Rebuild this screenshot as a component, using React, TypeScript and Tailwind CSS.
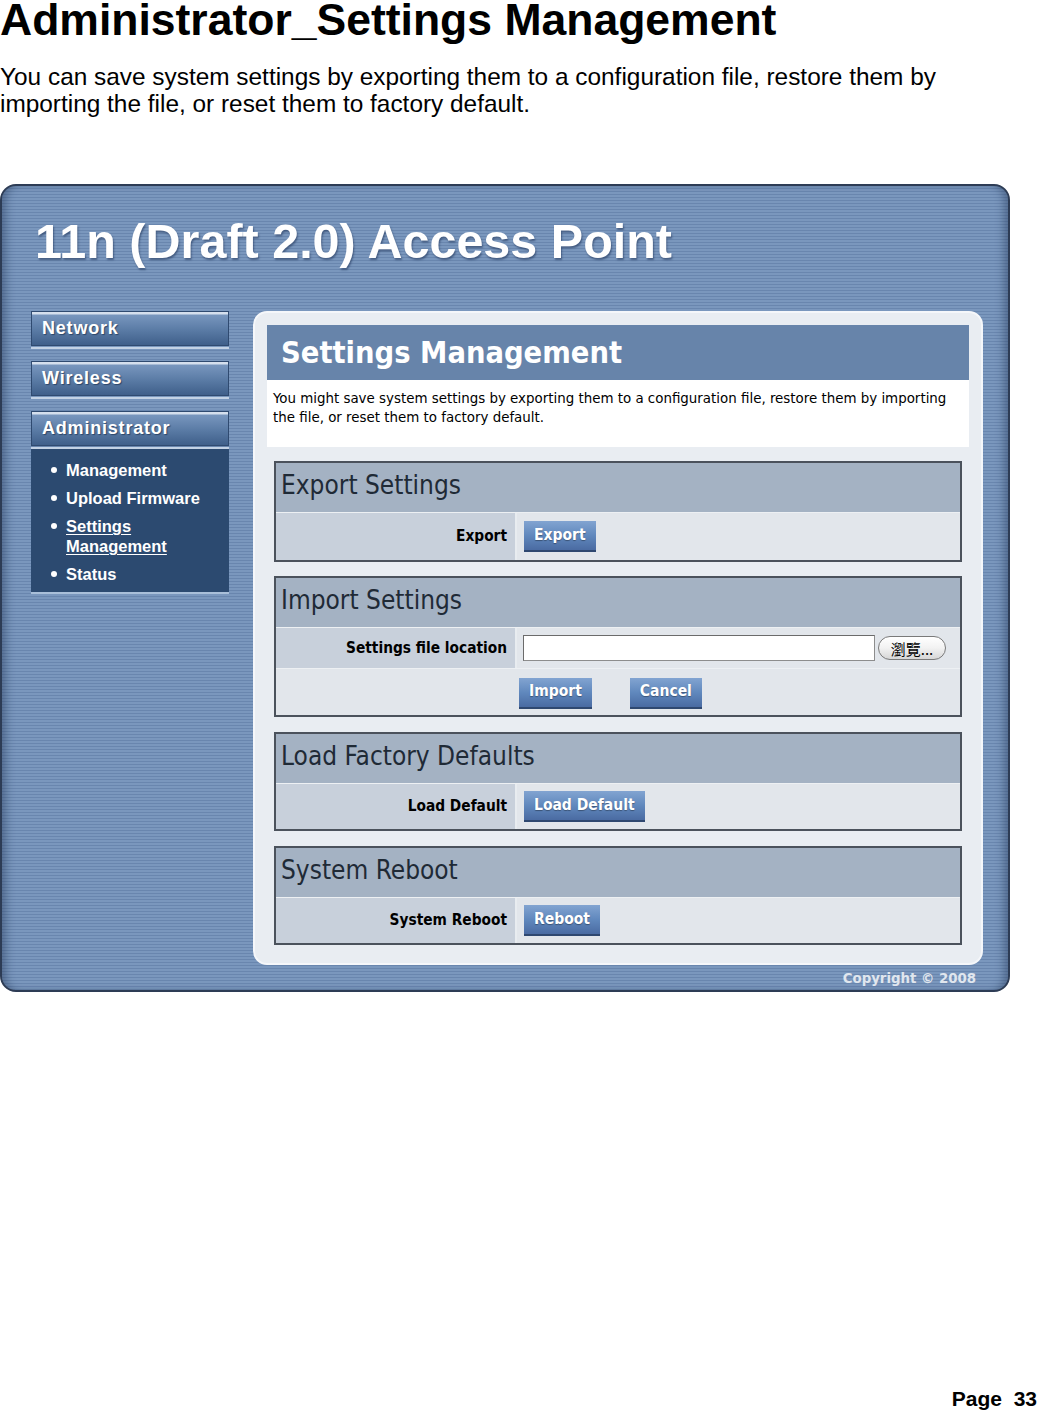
import React from "react";

const arial = "font-['Liberation_Sans',Arial,sans-serif]";
const tahoma = "font-['DejaVu_Sans_Condensed','DejaVu_Sans',sans-serif]";

function NavButton({ label }: { label: string }) {
  return (
    <div className="flex flex-col">
      <div
        className={`h-[35px] border border-[#2f4a70] bg-[linear-gradient(180deg,#d5dfed_0px,#d5dfed_2px,#7896be_3px,#5a7ba5_55%,#3f5f8a_100%)] flex items-center pl-[10px] text-white font-bold text-[18px] tracking-[0.8px] ${arial} [text-shadow:1px_1px_1px_rgba(20,40,70,0.6)]`}
      >
        {label}
      </div>
      <div className="h-[2px] mt-[1px] bg-[#c3d2e5]" />
    </div>
  );
}

function BlueButton({ children }: { children: React.ReactNode }) {
  return (
    <button
      className={`h-[31px] px-[10px] text-white font-bold text-[15.5px] ${tahoma} bg-[linear-gradient(180deg,#82a4d1_0%,#6088bd_50%,#4a6ba2_100%)] border-b-2 border-[#2f4870] [text-shadow:0_1px_1px_rgba(0,0,0,0.35)]`}
    >
      {children}
    </button>
  );
}

function Box({ title, children, className = "" }: { title: string; children: React.ReactNode; className?: string }) {
  return (
    <div className={`border-2 border-[#4b525c] flex flex-col ${className}`}>
      <div className={`h-[49px] bg-[#a4b2c3] pl-[5px] pt-[7px] text-[26px] leading-[30px] text-[#1f2a36] ${tahoma}`}>
        {title}
      </div>
      {children}
    </div>
  );
}

function Row({ label, height, children }: { label: string; height: string; children: React.ReactNode }) {
  return (
    <div className={`flex ${height} border-t border-[#edf0f3]`}>
      <div
        className={`w-[241px] bg-[#c8d0db] border-r-2 border-[#e8ecf0] flex items-center justify-end pr-[8px] font-bold text-[15.3px] text-black ${tahoma}`}
      >
        {label}
      </div>
      <div className="flex-1 bg-[#e2e6eb] flex items-center pl-[7px]">{children}</div>
    </div>
  );
}

export default function App() {
  return (
    <div className={`w-[1037px] h-[1411px] bg-white flex flex-col ${arial} text-black`}>
      <h1 className="text-[44.5px] leading-[40px] font-bold whitespace-nowrap">Administrator_Settings Management</h1>
      <p className="mt-[23px] text-[24.4px] leading-[27px] w-[1000px]">
        You can save system settings by exporting them to a configuration file, restore them by importing the file, or
        reset them to factory default.
      </p>

      <div className="mt-[67px] w-[1010px] h-[808px] border-2 border-[#2d3c55] rounded-[16px] overflow-hidden flex flex-col bg-[repeating-linear-gradient(180deg,#7a97bd_0px,#7a97bd_2px,#6986ae_2px,#6986ae_3px)] shadow-[inset_8px_0_8px_-4px_rgba(30,50,85,0.45),inset_-8px_0_8px_-4px_rgba(30,50,85,0.45)]">
        <div
          className={`pl-[33px] pt-[31px] h-[79px] text-[48.5px] leading-[48px] font-bold text-white whitespace-nowrap ${arial} [text-shadow:1px_2px_2px_rgba(30,50,85,0.55)]`}
        >
          11n (Draft 2.0) Access Point
        </div>

        <div className="mt-[46px] flex pl-[29px] gap-[24px]">
          {/* Sidebar */}
          <div className="w-[198px] flex flex-col">
            <NavButton label="Network" />
            <div className="mt-[12px]">
              <NavButton label="Wireless" />
            </div>
            <div className="mt-[12px]">
              <NavButton label="Administrator" />
            </div>
            <div className={`bg-[#2c4a70] border-b-2 border-[#a9bfd9] pt-[11px] pb-[8px] flex flex-col gap-[8px] ${arial}`}>
              {[
                { t: "Management", link: false },
                { t: "Upload Firmware", link: false },
                { t: "Settings Management", link: true },
                { t: "Status", link: false },
              ].map((it) => (
                <div key={it.t} className="flex items-start">
                  <div className="w-[35px] h-[20px] flex items-center justify-end pr-[9px] shrink-0">
                    <span className="w-[6px] h-[6px] rounded-full bg-white block" />
                  </div>
                  <span
                    className={`flex-1 text-white font-bold text-[16.5px] leading-[20px] ${
                      it.link ? "underline decoration-1 underline-offset-2" : ""
                    }`}
                  >
                    {it.t}
                  </span>
                </div>
              ))}
            </div>
          </div>

          {/* Panel */}
          <div className="w-[730px] h-[654px] rounded-[14px] border-2 border-[#f5f7fa] bg-[#e9edf2] p-[12px] flex flex-col">
            <div
              className={`h-[55px] bg-[#6784aa] pl-[14px] flex items-center text-white font-bold text-[30.5px] ${tahoma}`}
            >
              Settings Management
            </div>
            <div className={`h-[67px] bg-white pl-[6px] pt-[9px] text-[14.9px] leading-[19px] text-black whitespace-nowrap ${tahoma}`}>
              You might save system settings by exporting them to a configuration file, restore them by importing
              <br />
              the file, or reset them to factory default.
            </div>

            <div className="mx-[7px] flex flex-col">
              <Box title="Export Settings" className="mt-[14px]">
                <Row label="Export" height="h-[48px]">
                  <BlueButton>Export</BlueButton>
                </Row>
              </Box>

              <Box title="Import Settings" className="mt-[14px]">
                <Row label="Settings file location" height="h-[41px]">
                  <div className="flex items-center -ml-[1px]">
                    <div className="w-[352px] h-[26px] bg-white border border-[#8d8d8d] border-t-[#6b6b6b] border-l-[#6b6b6b]" />
                    <button
                      className="ml-[3px] w-[68px] h-[24px] rounded-full border border-[#7a7a7a] bg-[linear-gradient(180deg,#ffffff_0%,#f2f2f2_50%,#d6d6d6_100%)] flex items-center justify-center text-[15px] text-black font-['Noto_Sans_CJK_TC','Noto_Sans_CJK_SC',sans-serif] leading-none"
                    >
                      瀏覽...
                    </button>
                  </div>
                </Row>
                <div className="flex h-[47px] border-t border-[#edf0f3] bg-[#e2e6eb] items-center pt-[2px] pl-[243px] gap-[38px]">
                  <BlueButton>Import</BlueButton>
                  <BlueButton>Cancel</BlueButton>
                </div>
              </Box>

              <Box title="Load Factory Defaults" className="mt-[15px]">
                <Row label="Load Default" height="h-[46px]">
                  <BlueButton>Load Default</BlueButton>
                </Row>
              </Box>

              <Box title="System Reboot" className="mt-[15px]">
                <Row label="System Reboot" height="h-[46px]">
                  <BlueButton>Reboot</BlueButton>
                </Row>
              </Box>
            </div>
          </div>
        </div>

        <div className="flex justify-end pr-[32px] mt-[5px]">
          <span className={`text-[14.8px] leading-[16px] font-bold text-[#e0e6ee] ${tahoma}`}>Copyright © 2008</span>
        </div>
      </div>

      <div className="mt-auto self-end text-[21px] leading-[24px] font-bold whitespace-pre">Page  33</div>
    </div>
  );
}
